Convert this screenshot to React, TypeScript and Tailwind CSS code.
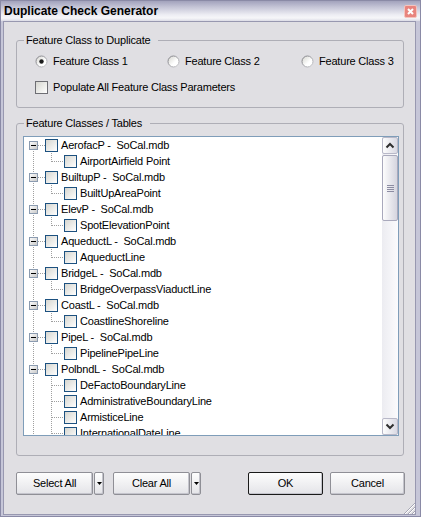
import React from 'react';

const font = "font-['Liberation_Sans',Arial,sans-serif]";

type Node = { label: string; children: string[] };

const tree: Node[] = [
  { label: 'AerofacP -  SoCal.mdb', children: ['AirportAirfield Point'] },
  { label: 'BuiltupP -  SoCal.mdb', children: ['BuiltUpAreaPoint'] },
  { label: 'ElevP -  SoCal.mdb', children: ['SpotElevationPoint'] },
  { label: 'AqueductL -  SoCal.mdb', children: ['AqueductLine'] },
  { label: 'BridgeL -  SoCal.mdb', children: ['BridgeOverpassViaductLine'] },
  { label: 'CoastL -  SoCal.mdb', children: ['CoastlineShoreline'] },
  { label: 'PipeL -  SoCal.mdb', children: ['PipelinePipeLine'] },
  {
    label: 'PolbndL -  SoCal.mdb',
    children: [
      'DeFactoBoundaryLine',
      'AdministrativeBoundaryLine',
      'ArmisticeLine',
      'InternationalDateLine',
      'MaritimeBoundaryLine',
    ],
  },
];

const dot = { stroke: '#a0a0a0', strokeDasharray: '1 1', shapeRendering: 'crispEdges' as const };

function Box() {
  return (
    <div className="w-[13px] h-[13px] shrink-0 border border-[#1c5180] bg-linear-to-br from-[#d6d6d0] to-white" />
  );
}

function RootGutter({ first, id }: { first: boolean; id: string }) {
  return (
    <svg width="21" height="16" className="shrink-0">
      <defs>
        <linearGradient id={id} x1="0" y1="0" x2="1" y2="1">
          <stop offset="0" stopColor="#ffffff" />
          <stop offset="1" stopColor="#c6c6c6" />
        </linearGradient>
      </defs>
      <line x1="9.5" y1={first ? 8 : 0} x2="9.5" y2="16" {...dot} />
      <line x1="14" y1="8.5" x2="21" y2="8.5" {...dot} />
      <rect x="5.5" y="4.5" width="8" height="8" fill={`url(#${id})`} stroke="#8b9bb0" shapeRendering="crispEdges" />
      <line x1="7" y1="8.5" x2="12" y2="8.5" stroke="#000" shapeRendering="crispEdges" />
    </svg>
  );
}

function ChildGutter({ last }: { last: boolean }) {
  return (
    <svg width="40" height="16" className="shrink-0">
      <line x1="9.5" y1="0" x2="9.5" y2="16" {...dot} />
      <line x1="27.5" y1="0" x2="27.5" y2={last ? 9 : 16} {...dot} />
      <line x1="28" y1="8.5" x2="40" y2="8.5" {...dot} />
    </svg>
  );
}

function Tree() {
  const rows: React.ReactNode[] = [];
  tree.forEach((n, i) => {
    rows.push(
      <div key={n.label} className="flex items-center h-[16px]">
        <RootGutter first={i === 0} id={`exp${i}`} />
        <Box />
        <span className="ml-[3px] whitespace-pre">{n.label}</span>
      </div>
    );
    n.children.forEach((c, j) => {
      rows.push(
        <div key={c} className="flex items-center h-[16px]">
          <ChildGutter last={j === n.children.length - 1} />
          <Box />
          <span className="ml-[3px] whitespace-pre">{c}</span>
        </div>
      );
    });
  });
  return <div className="flex-1 overflow-hidden text-[11px] leading-[16px] text-black">{rows}</div>;
}

function ScrollButton({ up }: { up: boolean }) {
  return (
    <div className="h-[17px] rounded-[2px] border border-[#b8b8c8] bg-linear-to-r from-[#fdfdfd] to-[#d9d9e3] flex items-center justify-center">
      <svg width="10" height="7" viewBox="0 0 10 7">
        <path d={up ? 'M1.5 5.5 L5 2 L8.5 5.5' : 'M1.5 1.5 L5 5 L8.5 1.5'} stroke="#2e2e2e" strokeWidth="2" fill="none" />
      </svg>
    </div>
  );
}

function Scrollbar() {
  return (
    <div className="w-[16px] flex flex-col bg-linear-to-r from-[#ececf1] to-[#fbfbfd]">
      <ScrollButton up />
      <div className="mt-[1px] h-[66px] rounded-[2px] border border-[#a9a9bc] bg-linear-to-r from-[#fdfdfd] to-[#d5d5df] flex flex-col items-center justify-center gap-[1px]">
        {[0, 1, 2, 3].map((k) => (
          <div key={k} className="w-[7px] h-[1px] bg-[#8c8ca2]" />
        ))}
      </div>
      <div className="flex-1" />
      <ScrollButton up={false} />
    </div>
  );
}

function Radio({ checked, id }: { checked?: boolean; id: string }) {
  return (
    <svg width="13" height="13" viewBox="0 0 13 13" className="shrink-0">
      <defs>
        <linearGradient id={id} x1="0" y1="0" x2="1" y2="1">
          <stop offset="0" stopColor="#d4d4ce" />
          <stop offset="0.6" stopColor="#ffffff" />
        </linearGradient>
        <linearGradient id={`${id}s`} x1="0" y1="0" x2="1" y2="1">
          <stop offset="0" stopColor="#7a7a80" />
          <stop offset="1" stopColor="#c8c8cc" />
        </linearGradient>
      </defs>
      <circle cx="6.5" cy="6.5" r="5.5" fill={`url(#${id})`} stroke={`url(#${id}s)`} />
      {checked && <circle cx="6.5" cy="6.5" r="2.2" fill="#1c1c1c" />}
    </svg>
  );
}

function Button({ label, w, primary }: { label: string; w: string; primary?: boolean }) {
  return (
    <div
      className={`${w} h-[23px] flex items-center justify-center rounded-[2px] border bg-linear-to-b from-[#fdfdfd] to-[#e4e4e8] text-[11px] text-black shadow-[inset_-1px_-1px_0_#c4c4cc] ${
        primary ? 'border-[#1a1a1a]' : 'border-[#8f8f96]'
      }`}
    >
      {label}
    </div>
  );
}

function Split({ label }: { label: string }) {
  return (
    <div className="flex gap-[1px]">
      <Button label={label} w="w-[77px]" />
      <div className="w-[10px] h-[23px] flex items-center justify-center rounded-[2px] border border-[#8f8f96] bg-linear-to-b from-[#fdfdfd] to-[#e4e4e8] shadow-[inset_-1px_-1px_0_#c4c4cc]">
        <svg width="5" height="3" viewBox="0 0 5 3">
          <path d="M0 0 H5 L2.5 3 Z" fill="#000" />
        </svg>
      </div>
    </div>
  );
}

export default function App() {
  return (
    <div className={`${font} w-[421px] h-[517px] flex flex-col border border-[#8a8aa6] bg-[#c6c6d8] tracking-[-0.2px]`}>
      <div className="h-[20px] flex items-center justify-between pl-[3px] pr-[3px] bg-[linear-gradient(to_bottom,#a2a2bc_0%,#c4c4d6_30%,#eeeef4_70%,#f6f6f9_85%,#dcdce6_100%)]">
        <span className="text-[12px] font-bold text-black leading-none tracking-normal">Duplicate Check Generator</span>
        <svg width="13" height="13" viewBox="0 0 13 13">
          <rect x="0.5" y="0.5" width="12" height="12" rx="1.5" fill="#e8847e" stroke="#f4c4be" />
          <path d="M4 4 L9 9 M9 4 L4 9" stroke="#fff" strokeWidth="2" />
        </svg>
      </div>
      <div className="flex-1 flex pl-[2px] pr-[4px] pb-[1px]">
        <div className="relative flex-1 flex flex-col bg-[#e0dfe3] border border-[#9898b0] text-[11px] text-black">
          <fieldset className="mt-[12px] ml-[12px] mr-[11px] pl-[6px] pr-[4px] pb-[12px] border border-[#aeaeb6] rounded-[3px]">
            <legend className="ml-[1px] pl-[2px] pr-[8px] leading-[13px]">Feature Class to Duplicate</legend>
            <div className="mt-[6px] ml-[12px] flex h-[16px] items-center">
              <div className="w-[132px] flex items-center gap-[5px]">
                <Radio checked id="r1" />
                <span>Feature Class 1</span>
              </div>
              <div className="w-[134px] flex items-center gap-[5px]">
                <Radio id="r2" />
                <span>Feature Class 2</span>
              </div>
              <div className="flex items-center gap-[5px]">
                <Radio id="r3" />
                <span>Feature Class 3</span>
              </div>
            </div>
            <div className="mt-[10px] ml-[12px] flex h-[16px] items-center gap-[5px]">
              <div className="w-[13px] h-[13px] border border-[#6e6e74] bg-linear-to-br from-[#d6d6d0] to-white" />
              <span>Populate All Feature Class Parameters</span>
            </div>
          </fieldset>

          <fieldset className="mt-[9px] ml-[12px] mr-[11px] pl-[6px] pr-[4px] pb-[19px] border border-[#aeaeb6] rounded-[3px]">
            <legend className="ml-[1px] pl-[2px] pr-[8px] leading-[13px]">Feature Classes / Tables</legend>
            <div className="mt-[6px] h-[300px] flex border border-[#7f9db9] bg-white">
              <Tree />
              <Scrollbar />
            </div>
          </fieldset>

          <div className="mt-[16px] ml-[12px] mr-[10px] flex items-center">
            <Split label="Select All" />
            <div className="ml-[9px]">
              <Split label="Clear All" />
            </div>
            <div className="flex-1" />
            <Button label="OK" w="w-[75px]" primary />
            <div className="ml-[7px]">
              <Button label="Cancel" w="w-[75px]" />
            </div>
          </div>

          <svg width="12" height="12" viewBox="0 0 12 12" className="absolute right-0 bottom-0">
            {[3, 7, 11].map((o) => (
              <g key={o}>
                <line x1={12 - o} y1="12" x2="12" y2={12 - o} stroke="#a6a6b4" />
                <line x1={13 - o} y1="12" x2="12" y2={13 - o} stroke="#ffffff" />
              </g>
            ))}
          </svg>
        </div>
      </div>
    </div>
  );
}
